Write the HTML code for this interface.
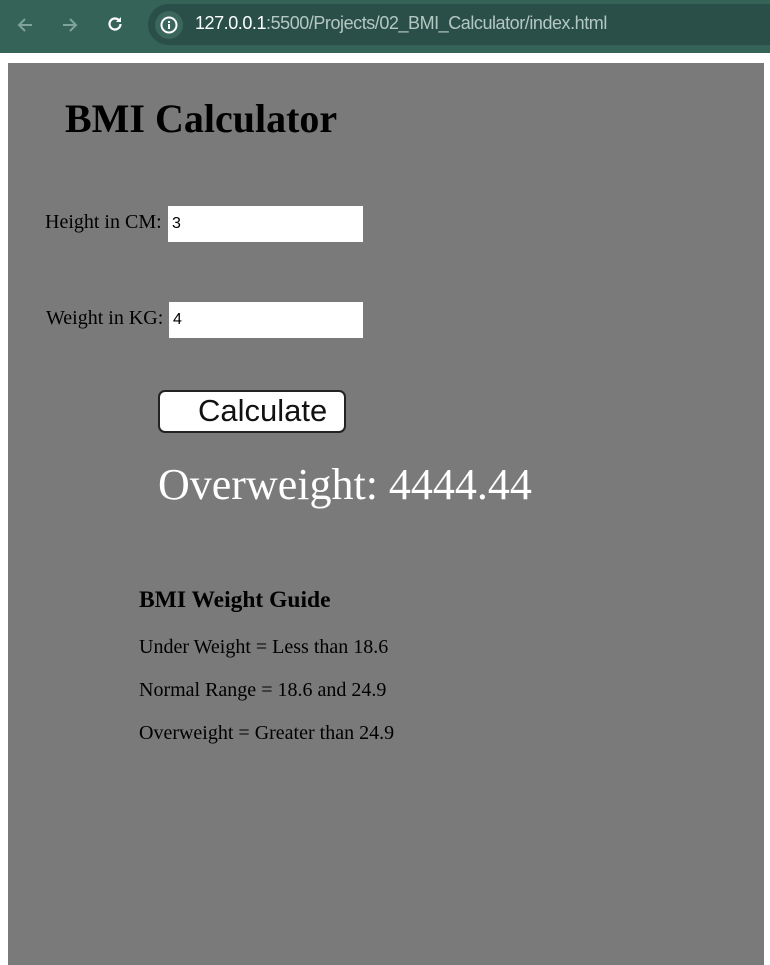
<!DOCTYPE html>
<html><head><style>
*{margin:0;padding:0;box-sizing:border-box}
body{width:770px;height:965px;background:#fff;position:relative;overflow:hidden;font-family:"Liberation Serif",serif}
.bar{position:absolute;left:0;top:0;width:770px;height:53px;background:#356357}
.url{position:absolute;left:148px;top:4px;width:640px;height:41px;border-radius:21px;background:#2a4f48}
.urltxt{position:absolute;left:195px;top:13px;font:18px "Liberation Sans",sans-serif;color:#fff;letter-spacing:-0.45px}
.urltxt span{color:#b5c7c2}
.info{position:absolute;left:155px;top:11px;width:28px;height:28px;border-radius:50%;background:#3b665c}
.page{position:absolute;left:8px;top:63px;width:756px;height:902px;background:#7a7a7a}
.a{position:absolute;color:#000;white-space:nowrap}
input{position:absolute;height:36px;width:195px;border:none;background:#fff;font:16px "Liberation Sans",sans-serif;padding-left:4px;color:#000}
</style></head><body>
<div class="bar"></div>
<div class="url"></div>
<div class="info"></div>
<svg style="position:absolute;left:160px;top:16px" width="18" height="18" viewBox="0 0 18 18"><circle cx="9" cy="9" r="7.5" fill="none" stroke="#fff" stroke-width="2"/><rect x="8" y="8" width="2" height="5" fill="#fff"/><rect x="8" y="5" width="2" height="2" fill="#fff"/></svg>
<svg style="position:absolute;left:15px;top:15px" width="20" height="20" viewBox="0 0 20 20"><path d="M17 10H4M10 4l-6 6 6 6" stroke="#7fa39a" stroke-width="2" fill="none"/></svg>
<svg style="position:absolute;left:60px;top:15px" width="20" height="20" viewBox="0 0 20 20"><path d="M3 10h13M10 4l6 6-6 6" stroke="#7fa39a" stroke-width="2" fill="none"/></svg>
<svg style="position:absolute;left:105px;top:14px" width="20" height="20" viewBox="0 0 20 20"><path d="M15.5 10a5.5 5.5 0 1 1-1.6-3.9" stroke="#fff" stroke-width="2.2" fill="none"/><path d="M16 3v5h-5z" fill="#fff"/></svg>
<div class="urltxt">127.0.0.1<span>:5500/Projects/02_BMI_Calculator/index.html</span></div>
<div class="page"></div>
<div class="a" style="left:65px;top:95px;font-size:40px;font-weight:bold">BMI Calculator</div>
<div class="a" style="left:45px;top:211px;font-size:20px">Height in CM:</div>
<input style="left:168px;top:206px" value="3">
<div class="a" style="left:46px;top:307px;font-size:20px">Weight in KG:</div>
<input style="left:169px;top:302px;width:194px" value="4">
<div style="position:absolute;left:158px;top:390px;width:188px;height:43px;border:2px solid #222;border-radius:7px;background:#fff;font:31px 'Liberation Sans',sans-serif;color:#111;padding-left:38px;line-height:38px;white-space:nowrap">Calculate</div>
<div class="a" style="left:158px;top:459px;font-size:44px;color:#fff">Overweight: 4444.44</div>
<div class="a" style="left:139px;top:587px;font-size:23.5px;font-weight:bold">BMI Weight Guide</div>
<div class="a" style="left:139px;top:636px;font-size:20px">Under Weight = Less than 18.6</div>
<div class="a" style="left:139px;top:679px;font-size:20px">Normal Range = 18.6 and 24.9</div>
<div class="a" style="left:139px;top:722px;font-size:20px">Overweight = Greater than 24.9</div>
</body></html>
